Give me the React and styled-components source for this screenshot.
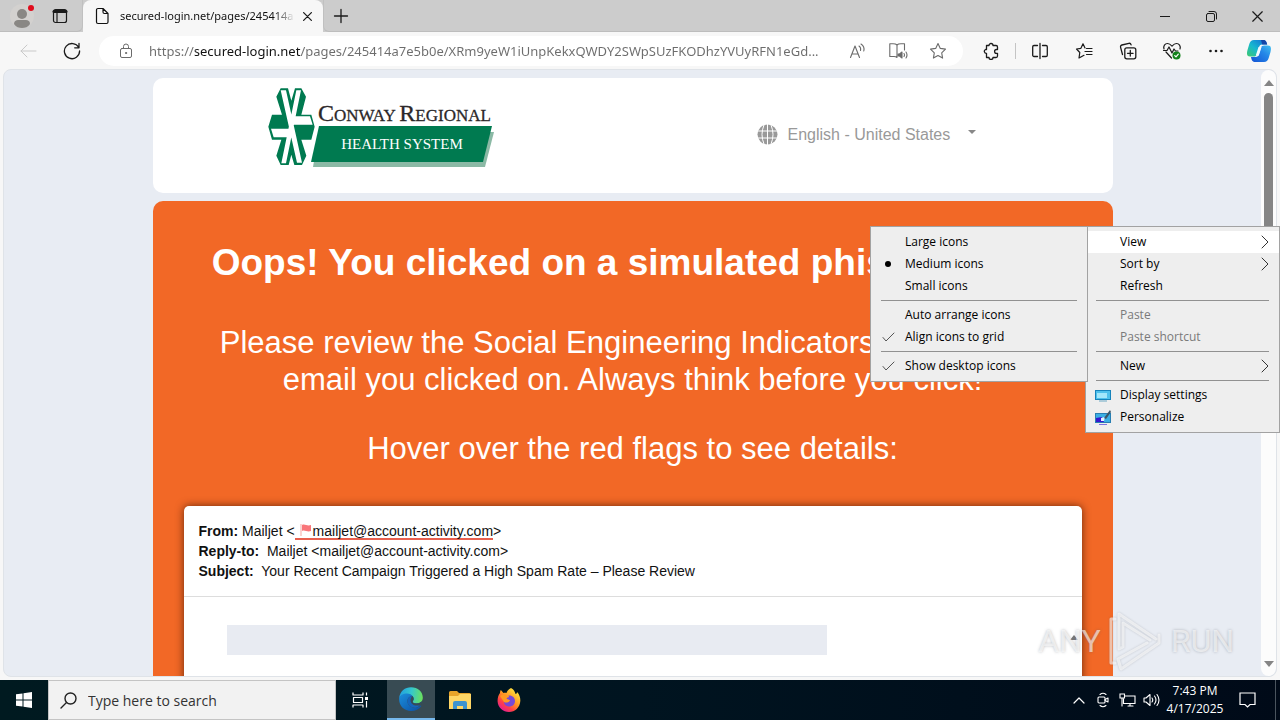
import React from "react";
import styled, { createGlobalStyle } from "styled-components";

const ui = `"Open Sans", "Noto Sans", sans-serif`;
const noto = `"Noto Sans", "Open Sans", sans-serif`;
const arial = `"Liberation Sans", Arial, sans-serif`;

const Global = createGlobalStyle`
  *, *::before, *::after { box-sizing: border-box; }
  body { margin: 0; font-family: ${ui}; color: #111; background: #f7f7f7; overflow: hidden; }
  button, input, select { font: inherit; color: inherit; }
  h1, p { margin: 0; }
`;

const Desktop = styled.div`
  position: relative;
  display: flex;
  flex-direction: column;
  height: 100vh;
  overflow: hidden;
`;

const IconButton = styled.button`
  display: flex;
  flex: none;
  align-items: center;
  justify-content: center;
  width: ${(p) => p.$w || 44}px;
  height: ${(p) => p.$h || 32}px;
  padding: 0;
  border: 0;
  background: transparent;
  color: ${(p) => p.$color || "#1b1b1b"};
  svg { display: block; }
`;

/* Tab strip */
const TabStrip = styled.div`
  display: flex;
  flex: none;
  align-items: stretch;
  height: 32px;
  background: #cccccc;
`;
const StripStart = styled.div`
  display: flex;
  width: 83px;
  padding-left: 2px;
  border-bottom: 1px solid #bdbdbd;
  border-right: 1px solid #c0c0c0;
  border-radius: 0 0 6px 0;
`;
const Tab = styled.div`
  display: flex;
  align-items: center;
  width: 240px;
  padding: 0 4px 0 12px;
  border-radius: 8px 8px 0 0;
  background: #f7f7f7;
  svg { flex: none; }
`;
const TabTitle = styled.span`
  flex: 1;
  min-width: 0;
  margin-left: 11px;
  overflow: hidden;
  white-space: nowrap;
  font-family: ${noto};
  font-size: 11px;
  line-height: 16px;
  mask-image: linear-gradient(90deg, #000 88%, transparent);
`;
const StripEnd = styled.div`
  display: flex;
  flex: 1;
  border-bottom: 1px solid #bdbdbd;
  border-left: 1px solid #c0c0c0;
  border-radius: 0 0 0 6px;
`;
const Spacer = styled.div`
  flex: 1;
`;

/* Toolbar */
const Toolbar = styled.div`
  display: flex;
  flex: none;
  align-items: center;
  height: 37px;
  padding-left: 6px;
  background: #f7f7f7;
`;
const AddressBar = styled.label`
  display: flex;
  flex: 1;
  align-items: center;
  min-width: 0;
  height: 30px;
  margin: 0 6px 0 5px;
  padding: 0 5px;
  border-radius: 15px;
  background: #fff;
`;
const Url = styled.input`
  flex: 1;
  min-width: 0;
  height: 24px;
  padding: 0 0 0 1px;
  border: 0;
  outline: 0;
  font-family: ${noto};
  font-size: 13px;
  color: transparent;
  background: linear-gradient(90deg, #6c6c6c 47px, #111 47px, #111 153px, #6c6c6c 153px);
  -webkit-background-clip: text;
  background-clip: text;
`;
const ToolDivider = styled.span`
  width: 1px;
  height: 16px;
  margin: 0 2px;
  background: #c4c4c4;
`;

/* Web page */
const PageFrame = styled.main`
  display: flex;
  flex: 1;
  min-height: 0;
  margin: 0 3px 3px;
  border: 1px solid #dfe3e8;
  border-radius: 8px;
  overflow: hidden;
  background: #e8ecf3;
`;
const PageView = styled.div`
  flex: 1;
  min-width: 0;
  overflow: hidden;
  padding-top: 8px;
  font-family: ${arial};
`;
const Column = styled.div`
  display: flex;
  flex-direction: column;
  gap: 8px;
  max-width: 960px;
  margin: 0 auto;
`;
const BrandCard = styled.header`
  display: flex;
  align-items: center;
  justify-content: space-between;
  height: 115px;
  padding: 0 137px 2px 115px;
  border-radius: 10px;
  background: #fff;
`;
const BrandLink = styled.a`
  align-self: flex-start;
  padding-top: 9px;
  svg { display: block; }
`;
const Language = styled.label`
  display: flex;
  align-items: center;
  gap: 10px;
  color: #999;
`;
const LanguageSelect = styled.select`
  appearance: none;
  width: 180px;
  padding: 0;
  border: 0;
  background: transparent;
  font-size: 16px;
  line-height: 24px;
`;
const SelectWrap = styled.span`
  display: flex;
  align-items: center;
`;
const Alert = styled.section`
  display: flex;
  flex-direction: column;
  padding: 40px 31px 0;
  border-radius: 10px 10px 0 0;
  background: #f26826;
  color: #fff;
  text-align: center;
`;
const AlertTitle = styled.h1`
  margin-bottom: 39px;
  font-size: 37px;
  line-height: 44px;
  font-weight: 700;
`;
const AlertText = styled.p`
  margin-bottom: 32px;
  font-size: 31px;
  line-height: 37px;
`;
const Mail = styled.article`
  margin-top: 7px;
  border-radius: 5px;
  background: #fff;
  color: #111;
  text-align: left;
  box-shadow: 0 0 8px 0 rgba(60, 20, 0, 0.75);
`;
const MailHead = styled.div`
  padding: 15px;
  border-bottom: 1px solid #ddd;
  font-size: 14px;
  line-height: 20px;
`;
const MailLine = styled.div`
  white-space: pre;
  height: 20px;
`;
const Flagged = styled.a`
  display: inline-block;
  height: 19px;
  padding-left: 4px;
  border-bottom: 2px solid #e8604f;
  color: inherit;
  text-decoration: none;
`;
const MailBody = styled.div`
  display: flex;
  justify-content: space-between;
  height: 260px;
  padding: 28px 3px 0 43px;
`;
const Block = styled.div`
  flex: 0 1 600px;
  height: 30px;
  background: #e8ebf2;
`;

const Scroller = styled.div`
  display: flex;
  flex: none;
  flex-direction: column;
  align-items: center;
  justify-content: space-between;
  width: 15px;
  padding: 10px 0 9px;
  border-radius: 8px;
  background: #fcfcfc;
  color: #858585;
  svg { display: block; }
`;
const Thumb = styled.div`
  width: 9px;
  height: 268px;
  margin: 7px 0 auto;
  border-radius: 5px;
  background: #858585;
`;

/* Watermark */
const Watermark = styled.div`
  position: absolute;
  right: 46px;
  bottom: 47px;
  display: flex;
  align-items: center;
  gap: 6px;
  color: rgba(255, 255, 255, 0.6);
  font-family: Roboto, sans-serif;
  font-size: 32px;
  line-height: 64px;
  text-shadow: 0 0 3px rgba(90, 95, 105, 0.4);
  pointer-events: none;
  svg { display: block; }
  g { filter: drop-shadow(0 0 1px rgba(80, 85, 95, 0.4)); }
`;

/* Context menus */
const Menu = styled.ul`
  position: absolute;
  top: 226px;
  right: ${(p) => p.$right}px;
  width: ${(p) => p.$w}px;
  margin: 0;
  padding: 4px 0;
  list-style: none;
  border: 1px solid #a2a2a2;
  background: #eeeeee;
  font-size: 12px;
`;
const MenuItem = styled.button`
  display: grid;
  grid-template-columns: 34px 1fr 14px;
  align-items: center;
  width: 100%;
  height: 22px;
  padding: 0 4px 0 0;
  border: 0;
  text-align: left;
  line-height: 16px;
  background: ${(p) => (p.$active ? "#fff" : "transparent")};
  color: ${(p) => (p.disabled ? "#7a7a7a" : "#000")};
`;
const MenuMark = styled.span`
  display: flex;
  justify-content: center;
`;
const MenuRule = styled.li`
  height: 1px;
  margin: 3px 10px;
  background: #919191;
`;

/* Taskbar */
const Taskbar = styled.footer`
  display: flex;
  flex: none;
  align-items: stretch;
  height: 40px;
  background: linear-gradient(90deg, #001a20, #001420 50%, #000a18);
  color: #fff;
`;
const TaskSearch = styled.label`
  display: flex;
  align-items: center;
  gap: 11px;
  flex: 0 1 288px;
  padding-left: 11px;
  border: 1px solid #c4c4c4;
  background: #f2f2f2;
  color: #222;
`;
const SearchInput = styled.input`
  flex: 1;
  min-width: 0;
  padding: 0;
  border: 0;
  outline: 0;
  background: transparent;
  font-size: 14px;
  &::placeholder { color: #333; opacity: 1; }
`;
const TaskApp = styled(IconButton)`
  margin-left: ${(p) => (p.$active ? 3 : 0)}px;
  background: ${(p) => (p.$active ? "#384b53" : "transparent")};
  border-bottom: ${(p) => (p.$active ? "2px solid #76b9ed" : "0")};
`;
const Clock = styled.time`
  display: flex;
  flex-direction: column;
  justify-content: center;
  width: 64px;
  text-align: center;
  font-size: 12px;
  line-height: 18px;
`;
const ShowDesktop = styled.button`
  width: 5px;
  margin-left: 8px;
  padding: 0;
  border: 0;
  border-left: 1px solid #4a545e;
  background: transparent;
`;

const Svg = ({ w = 20, h = w, box = `0 0 ${w} ${h}`, sw = 1, children, ...rest }) => (
  <svg width={w} height={h} viewBox={box} fill="none" stroke="currentColor" strokeWidth={sw}
    strokeLinecap="round" strokeLinejoin="round" aria-hidden="true" {...rest}>{children}</svg>
);

const Arrow = ({ down }) => (
  <svg width="10" height="6" viewBox="0 0 10 6" aria-hidden="true">
    <path d={down ? "M0 0h10L5 6z" : "M0 6h10L5 0z"} fill="currentColor" />
  </svg>
);

const Avatar = () => (
  <Svg w={30} h={28} stroke="none">
    <circle cx="15" cy="14" r="12" fill="#d3d1cf" />
    <circle cx="15" cy="12" r="5" fill="#898784" />
    <path d="M7 22c0-3 2-4 4-4h8c2 0 4 1 4 4-2 3-5 4-8 4s-6-1-8-4z" fill="#898784" />
    <circle cx="24" cy="6" r="3" fill="#e00b1c" />
  </Svg>
);
const Workspaces = () => (
  <Svg w={16} sw={1.2}>
    <rect x="1.5" y="1.5" width="13" height="13" rx="2" />
    <path d="M2 3.5h12" strokeWidth="3" />
    <path d="M5 5v9" />
  </Svg>
);
const PageIcon = () => (
  <Svg w={14} h={18} sw={1.2}>
    <path d="M3 1.5h5l5 5v8.500a1.500 1.500 0 0 1-1.500 1.500H3A1.500 1.500 0 0 1 1.500 15V3A1.500 1.500 0 0 1 3 1.500zM8 1.500V5A1.500 1.500 0 0 0 9.500 6.500H13" />
  </Svg>
);
const Cross = ({ s = 10 }) => (
  <Svg w={s} box="0 0 10 10" sw={s > 9 ? 1.1 : 1.4}><path d="M.7.7l8.600 8.600M9.300.7L.7 9.300" /></Svg>
);
const Plus = () => <Svg w={16} sw={1.3}><path d="M8 1.500v13M1.500 8h13" /></Svg>;
const Back = () => <Svg w={18}><path d="M17 9H2M8 3L2 9l6 6" /></Svg>;
const Refresh = () => (
  <Svg w={18} sw={1.3}><path d="M15.700 5.500A7.600 7.600 0 1 0 16.600 9M16 1.500v4.300h-4.300" /></Svg>
);
const Lock = () => (
  <Svg w={14} h={16}>
    <rect x="1.500" y="5.500" width="11" height="9" rx="1.500" />
    <path d="M4.500 5.500V3.500a2.500 2.500 0 0 1 5 0v2" />
    <circle cx="7" cy="10" r=".6" fill="currentColor" />
  </Svg>
);
const ReadAloud = () => (
  <Svg w={18} h={16} sw={1.1}>
    <path d="M1.500 14.500L6 3l4.500 11.500M3 11h6M10 3c1.500 1 2 2.500 1.500 4.500M12 1c2.500 1.500 3.500 4 2.800 7" />
  </Svg>
);
const Reader = () => (
  <Svg w={20} h={18} sw={1.1}>
    <path d="M9 3v12M9 3C8 2 7 1.800 5 1.800H1.800v12.700H6c1.500 0 2.300.4 3 1M9 3c1-1 2-1.200 4-1.200h3.500V8" />
    <path d="M10 12h1.500l2.500-2v6l-2.500-2H10z" fill="currentColor" />
    <path d="M16 11.500q1 1.500 0 3M18 10q2 3 0 6" />
  </Svg>
);
const Star = () => (
  <Svg w={18} sw={1.1}>
    <path d="M9 1.500l2.300 4.900 5.200.7-3.800 3.700.9 5.300L9 13.600l-4.600 2.500.9-5.300L1.500 7.100l5.200-.7z" />
  </Svg>
);
const Puzzle = () => (
  <Svg w={18} sw={1.3}>
    <path d="M4.500 3.500H7a2 2 0 0 1 4 0h3c.8 0 1.500.6 1.500 1.500v2.500h-1a1.900 1.900 0 0 0 0 3.800h1V14c0 .8-.7 1.500-1.500 1.500h-3a2 2 0 0 1-4 0H4.500V11.300a2 2 0 0 1-1-3.800h1z" />
  </Svg>
);
const Split = () => (
  <Svg w={18} sw={1.3}>
    <path d="M6.500 3.500H3A1.300 1.300 0 0 0 1.700 4.800v8.400A1.300 1.300 0 0 0 3 14.500h3.500M11.500 3.500H15a1.300 1.300 0 0 1 1.300 1.300v8.400a1.300 1.300 0 0 1-1.300 1.300h-3.500M9 1.500v15" />
  </Svg>
);
const Favorites = () => (
  <Svg w={18} sw={1.2}>
    <path d="M10 6L8 1.800 5.900 6.300 1.500 7l3.300 3.500L4 16l5-2.700M11.500 6.500h5.500M10 9.500h7M11.500 12.500h5.500" />
  </Svg>
);
const Collections = () => (
  <Svg w={18} sw={1.3}>
    <rect x="5.800" y="5.800" width="11" height="11" rx="2" />
    <path d="M11.300 8.500v5.500M8.500 11.300h5.600M3.500 12.500L1.600 5.300c-.3-1 .2-2 1.300-2.300l7-1.700c1-.2 1.900.4 2.200 1.500" />
  </Svg>
);
const Health = () => (
  <Svg w={20} h={18} sw={1.2}>
    <path d="M2 7C1 4 3 1.500 5.500 1.500c2 0 3 1 4.500 2.700 1.500-1.700 2.500-2.700 4.500-2.700C17 1.500 19 4 18 7M4 10l5.500 6M1.500 8.500H5l2-3.500 3 6 2-4 1.500 2H16" />
    <circle cx="14.500" cy="13.500" r="4" fill="#13821b" stroke="none" />
    <path d="M12.700 13.600l1.300 1.200 2.300-2.600" stroke="#fff" />
  </Svg>
);
const Dots = () => (
  <Svg w={16} h={4} stroke="none" fill="currentColor">
    <circle cx="2.500" cy="2" r="1.300" /><circle cx="8" cy="2" r="1.300" /><circle cx="13.500" cy="2" r="1.300" />
  </Svg>
);
const Copilot = () => (
  <svg width="26" height="24" viewBox="0 0 26 24" aria-hidden="true">
    <defs>
      <linearGradient id="cpA" x1="0" y1="1" x2="1" y2="0">
        <stop offset="0" stopColor="#3fc96f" /><stop offset=".45" stopColor="#16b8cf" /><stop offset="1" stopColor="#1366d9" />
      </linearGradient>
      <linearGradient id="cpB" x1="0" y1="1" x2="1" y2="0">
        <stop offset="0" stopColor="#1453d4" /><stop offset=".6" stopColor="#2588e8" /><stop offset="1" stopColor="#42c2f0" />
      </linearGradient>
    </defs>
    <path d="M8 1h9c3 0 3.500 2 4.200 4.500h-5c-2 0-2.700 1.200-3.300 3.200l-1.800 6C10.400 17 9.500 17.500 7.500 17.500H4C.5 17.500.7 14 1.500 11l1.800-6C4.200 2.200 5.500 1 8 1z" fill="url(#cpA)" />
    <path d="M18 23H9.500C6.500 23 5.500 21 5 18h4.500c2 0 3-.8 3.600-3l1.800-6c.6-2 1.500-2.600 3.500-2.600H22c3.500 0 3.300 3.500 2.500 6.500l-1.800 6C21.800 21.700 20.500 23 18 23z" fill="url(#cpB)" />
    <path d="M12.500 8h3l-2.700 8.500h-3z" fill="#f2f9ff" />
    <path d="M17 1c3 0 3.500 2 4.200 4.500h-5L15 1z" fill="#1546a8" />
  </svg>
);

const BrandLogo = () => (
  <svg width="228" height="82" viewBox="0 0 228 82" role="img" aria-label="Conway Regional Health System">
    <g transform="translate(-4 -3) scale(.3333)">
      <path d="M50 13H72L82 50L93 13H112L126 38L112 92H142L152 128L142 167H112L127 215L114 243H91L82 212L74 243H50L37 215L52 167H24L13 128L24 92H54L37 38Z" fill="#007a50" />
      <path d="M50 19H66L114 236H99ZM97 19H111L66 238H52ZM21 134H90V160H29ZM84 97H138L146 122H84Z" fill="#fff" />
    </g>
    <path d="M51 45h175l-9 35H45z" fill="#8bb9a5" />
    <path d="M51 39h173l-9 36H43z" fill="#007a50" />
    <text x="50" y="34" fontFamily="Liberation Serif" fontSize="24" fill="#2b2729" stroke="#2b2729" strokeWidth=".3">
      C<tspan fontSize="17">ONWAY </tspan>R<tspan fontSize="17">EGIONAL</tspan>
    </text>
    <text x="134" y="62" textAnchor="middle" fontFamily="Liberation Serif" fontSize="15" fill="#fff">HEALTH SYSTEM</text>
  </svg>
);
const Globe = () => (
  <svg width="21" height="21" viewBox="0 0 21 21" aria-hidden="true">
    <circle cx="10.500" cy="10.500" r="10" fill="#999" />
    <path d="M10.500 0v21M0 7h21M0 14h21M7 1q-4 9.500 0 19M14 1q4 9.500 0 19" stroke="#fff" fill="none" />
  </svg>
);
const Flag = () => (
  <svg width="14" height="12" viewBox="0 0 14 12" aria-hidden="true">
    <path d="M2 0v12" stroke="#f5a9a4" />
    <path d="M3 1c3-1.500 5 1.500 9 0v6c-4 1.500-6-1.500-9 0z" fill="#f9767a" />
  </svg>
);
const PlayMark = () => (
  <Svg w={58} h={64} sw={3}>
    <g stroke="rgba(255,255,255,.6)">
      <path d="M8 10H4V54H8" />
      <path d="M49 30L12 5V40L16 38V14L43 31" />
      <path d="M52 26V34L14 60L11 50L40 34" />
    </g>
  </Svg>
);

const Tick = () => <Svg w={13} h={10} stroke="#555"><path d="M1 5.500L4 9l8-8" /></Svg>;
const Bullet = () => <svg width="6" height="6" aria-hidden="true"><circle cx="3" cy="3" r="3" /></svg>;
const Chevron = () => <Svg w={8} h={14} stroke="#333"><path d="M1 1l6 6-6 6" /></Svg>;
const DisplayIcon = () => (
  <svg width="16" height="13" viewBox="0 0 16 13" aria-hidden="true">
    <path d="M0 1h16v10H0z" fill="#1683bb" /><path d="M1 2h14v8H1z" fill="#4fc1ec" />
    <path d="M2 4h10v5H2z" fill="#a3e7fb" /><path d="M4 12h8" stroke="#6ca9c4" />
  </svg>
);
const PersonalizeIcon = () => (
  <svg width="16" height="15" viewBox="0 0 16 15" aria-hidden="true">
    <path d="M0 3h16v10H0z" fill="#287fb2" /><path d="M1 4h14v8H1z" fill="#3baee3" />
    <path d="M1 8l6-1 2 5H1z" fill="#3516cf" /><path d="M6 8l4-1-1 4H6z" fill="#e3f2ff" />
    <path d="M9 8l6-8 1 2-5 7z" fill="#3b5668" /><path d="M4 14.500h8" stroke="#7b72df" />
  </svg>
);

const WindowsLogo = () => (
  <svg width="16" height="16" viewBox="0 0 16 16" aria-hidden="true">
    <path d="M0 2.300l6.500-.9v6.100H0zM7.500 1.200L16 0v7.500H7.500zM0 8.500h6.500v6.100L0 13.700zM7.500 8.500H16V16l-8.500-1.200z" fill="#fff" />
  </svg>
);
const SearchGlyph = () => <Svg w={17} sw={1.4}><circle cx="10.500" cy="6.500" r="5.500" /><path d="M6.500 10.500L1 16" /></Svg>;
const TaskViewIcon = () => (
  <Svg w={17} h={16} strokeLinecap="butt" sw={1.2}>
    <path d="M1 .5v2.500h10V.5M1 15.500V13h10v2.500M1.500 5.500h9v5h-9zM14.500 .5v3M14.500 9v6.500" />
    <path d="M13 5h3v3h-3z" fill="currentColor" stroke="none" />
  </Svg>
);
const EdgeIcon = () => (
  <svg width="24" height="24" viewBox="0 0 24 24" aria-hidden="true">
    <defs>
      <linearGradient id="egT" x1="0" y1=".4" x2="1" y2=".5">
        <stop offset="0" stopColor="#219fe0" /><stop offset=".5" stopColor="#35c7cd" /><stop offset="1" stopColor="#6be15c" />
      </linearGradient>
      <linearGradient id="egB" x1="0" y1="0" x2="1" y2="1">
        <stop offset="0" stopColor="#1b8fdc" /><stop offset="1" stopColor="#0c4fa4" />
      </linearGradient>
    </defs>
    <path d="M.2 11C1 4 6 .2 12 .2 19 .2 23.800 5 23.800 10.500c0 4-3 6-6.300 6-2.500 0-4-1-4-1.800 0-.6 1-1 1-2.700C14.500 9.500 12 7 8.500 7 4.500 7 1.500 9 .2 11z" fill="url(#egT)" />
    <path d="M.2 11C1 8.500 4 6.500 8 6.500c2.500 0 4.500 1 5.500 2.500C10 9 8 12 8.500 15c.6 4 5 6.700 9.500 5.500 1.500-.4 2.500-1 3.500-1.800.4-.3.900 0 .6.500C20 22 16.500 24 12 24 5 24-.5 18.500.2 11z" fill="url(#egB)" />
    <path d="M8.500 15C8 12 10 9 13.500 9c1.500 2 1.300 4 .4 5-.8 1 .4 2.500 3.600 2.500 2 0 3.800-.7 5-2-.5 3-2.500 5.300-5 6-4 1-8.400-1.500-9-5.500z" fill="#1565bd" />
    <path d="M13.500 9c1.500 1.500 1.400 4 .4 5-.8 1 .4 2.500 3.600 2.500 2 0 3.800-.7 5-2l-.9 3.200c-3 1.600-7.600 1-9.300-1.700-1.500-2.300-.8-5.500 1.200-7z" fill="#384b53" />
  </svg>
);
const FolderIcon = () => (
  <svg width="22" height="19" viewBox="0 0 22 19" aria-hidden="true">
    <path d="M0 1.500Q0 0 1.500 0H8l2 2h10.500Q22 2 22 3.500V18H0z" fill="#e8a52a" />
    <path d="M0 5h9l2-2h11v15H0z" fill="#ffd766" />
    <path d="M4 18v-6q0-2 2-2h10q2 0 2 2v6h-4v-3H8v3z" fill="#3e94cf" />
  </svg>
);
const FirefoxIcon = () => (
  <svg width="24" height="24" viewBox="0 0 24 24" aria-hidden="true">
    <defs>
      <linearGradient id="ffx" x1=".8" y1=".1" x2=".2" y2=".9">
        <stop offset="0" stopColor="#ffe23d" /><stop offset=".45" stopColor="#ff9422" /><stop offset=".75" stopColor="#ff4046" /><stop offset="1" stopColor="#e6218c" />
      </linearGradient>
    </defs>
    <path d="M14 0c3 1.500 4 4 4.500 6 1 0 1.500-.8 1.500-2 2.500 2.500 3.500 6 3.300 9C23 19.500 18 24 12 24S1 19.500.6 13.500C.4 10 1.500 7 3 5c0 0 0-1.500.8-3C5 3 5.500 4 6.500 5c1-.3 2-.3 3 0C10 3 12 1 14 0z" fill="url(#ffx)" />
    <path d="M11.500 7.500c3.500-.5 6.500 2 6.500 5.500 0 3.300-2.500 5.500-5.700 5.500-3.300 0-5.500-2.200-5.500-5 1 1 2.500 1 3.700.3 1.500-1 2-1 2-1.800-1.300-.5-2.800-.6-3.500-2 .5-1 2-1 2.500-1.200z" fill="#7649d6" />
    <path d="M3 8c2-1.500 4-1.500 6-.5 1.500.7 3 .5 3 1.300 0 .7-2 .7-2.500 1.700 0 1.500 3.500 1 3.500 2.200-1 1.300-3.500 2.600-6 1.300z" fill="#ff9a22" />
  </svg>
);
const MeetIcon = () => (
  <Svg w={12} h={16} sw={1.1}>
    <rect x="1" y="5" width="7" height="6" rx="1" /><path d="M8 7.500l3-1.500v4L8 8.500M3 2.500q3-2.500 6 0M3 13.500q3 2.500 6 0" />
  </Svg>
);
const NetIcon = () => (
  <Svg w={17} h={14} sw={1.1} strokeLinejoin="miter">
    <path d="M6 3h10v7.500H4.500V6M9 13h5M11 10.500V13M1 1h4.500v4H1zM3 5v8" />
  </Svg>
);
const VolumeIcon = () => (
  <Svg w={17} h={14} sw={1.1}><path d="M1 5h2l4-3.500v11L3 9H1zM9 5q1.500 2 0 4M11.500 3q3 4 0 8M14 1.500q4 5.500 0 11" /></Svg>
);
const NoteIcon = () => (
  <Svg w={17} h={16} sw={1.2} strokeLinejoin="miter"><path d="M1 1h15v11.500h-5L8.500 15 6 12.500H1z" /></Svg>
);

const viewMenu = [
  { label: "Large icons" },
  { label: "Medium icons", mark: <Bullet /> },
  { label: "Small icons" },
  null,
  { label: "Auto arrange icons" },
  { label: "Align icons to grid", mark: <Tick /> },
  null,
  { label: "Show desktop icons", mark: <Tick /> },
];
const desktopMenu = [
  { label: "View", more: true, active: true },
  { label: "Sort by", more: true },
  { label: "Refresh" },
  null,
  { label: "Paste", disabled: true },
  { label: "Paste shortcut", disabled: true },
  null,
  { label: "New", more: true },
  null,
  { label: "Display settings", mark: <DisplayIcon /> },
  { label: "Personalize", mark: <PersonalizeIcon /> },
];

const ContextMenu = ({ items, right, width }) => (
  <Menu $right={right} $w={width}>
    {items.map((item, i) =>
      item ? (
        <li key={item.label}>
          <MenuItem $active={item.active} disabled={item.disabled}>
            <MenuMark>{item.mark}</MenuMark>
            <span>{item.label}</span>
            {item.more && <Chevron />}
          </MenuItem>
        </li>
      ) : (
        <MenuRule key={i} />
      )
    )}
  </Menu>
);

const tools = [
  ["Split screen", <Split />],
  ["Favorites", <Favorites />],
  ["Collections", <Collections />],
  ["Browser essentials", <Health />],
  ["Settings and more", <Dots />],
];

export default function App() {
  return (
    <Desktop>
      <Global />
      <TabStrip>
        <StripStart>
          <IconButton $w={40} aria-label="Profile"><Avatar /></IconButton>
          <IconButton $w={36} aria-label="Tab actions"><Workspaces /></IconButton>
        </StripStart>
        <Tab>
          <PageIcon />
          <TabTitle>secured-login.net/pages/245414a</TabTitle>
          <IconButton $w={24} $h={24} aria-label="Close tab"><Cross s={9} /></IconButton>
        </Tab>
        <StripEnd>
          <IconButton $w={34} aria-label="New tab"><Plus /></IconButton>
          <Spacer />
          <IconButton $w={46} aria-label="Minimize"><Svg w={10}><path d="M0 5.500h10" /></Svg></IconButton>
          <IconButton $w={46} aria-label="Restore">
            <Svg w={11}><rect x=".5" y="2.500" width="8" height="8" rx="1.500" /><path d="M3 .5h5a2.500 2.500 0 0 1 2.500 2.500v5" /></Svg>
          </IconButton>
          <IconButton $w={46} aria-label="Close"><Cross s={11} /></IconButton>
        </StripEnd>
      </TabStrip>

      <Toolbar>
        <IconButton $color="#c9c9c9" aria-label="Back"><Back /></IconButton>
        <IconButton aria-label="Refresh"><Refresh /></IconButton>
        <AddressBar>
          <IconButton $color="#6b6b6b" aria-label="Site information"><Lock /></IconButton>
          <Url
            aria-label="Address"
            readOnly
            value="https://secured-login.net/pages/245414a7e5b0e/XRm9yeW1iUnpKekxQWDY2SWpSUzFKODhzYVUyRFN1eGd..."
          />
          <IconButton $w={40} $color="#6b6b6b" aria-label="Read aloud"><ReadAloud /></IconButton>
          <IconButton $w={40} $color="#6b6b6b" aria-label="Immersive reader"><Reader /></IconButton>
          <IconButton $w={40} $color="#6b6b6b" aria-label="Add to favorites"><Star /></IconButton>
        </AddressBar>
        <IconButton aria-label="Extensions"><Puzzle /></IconButton>
        <ToolDivider />
        {tools.map(([name, icon]) => (
          <IconButton key={name} aria-label={name}>{icon}</IconButton>
        ))}
        <IconButton $w={42} aria-label="Copilot"><Copilot /></IconButton>
      </Toolbar>

      <PageFrame>
        <PageView>
          <Column>
            <BrandCard>
              <BrandLink href="#"><BrandLogo /></BrandLink>
              <Language>
                <Globe />
                <SelectWrap>
                  <LanguageSelect aria-label="Language" defaultValue="en">
                    <option value="en">English - United States</option>
                  </LanguageSelect>
                  <svg width="8" height="10" viewBox="0 0 8 10" aria-hidden="true"><path d="M0 0h8L4 4z" fill="#888" /></svg>
                </SelectWrap>
              </Language>
            </BrandCard>
            <Alert>
              <AlertTitle>Oops! You clicked on a simulated phishing test!</AlertTitle>
              <AlertText>
                Please review the Social Engineering Indicators found in the<br />
                email you clicked on. Always think before you click!
              </AlertText>
              <AlertText>Hover over the red flags to see details:</AlertText>
              <Mail>
                <MailHead>
                  <MailLine>
                    <b>From:</b> Mailjet &lt;<Flagged href="#"><Flag />mailjet@account-activity.com</Flagged>&gt;
                  </MailLine>
                  <MailLine><b>Reply-to:</b>{"  Mailjet <mailjet@account-activity.com>"}</MailLine>
                  <MailLine><b>Subject:</b>{"  Your Recent Campaign Triggered a High Spam Rate – Please Review"}</MailLine>
                </MailHead>
                <MailBody>
                  <Block />
                  <Spacer />
                  <svg width="10" height="20" viewBox="0 0 10 20" aria-hidden="true"><path d="M1 15h8L5 10z" fill="#777" /></svg>
                </MailBody>
              </Mail>
            </Alert>
          </Column>
        </PageView>
        <Scroller>
          <Arrow />
          <Thumb />
          <Arrow down />
        </Scroller>
      </PageFrame>

      <Taskbar>
        <IconButton $w={48} $h={40} aria-label="Start"><WindowsLogo /></IconButton>
        <TaskSearch>
          <SearchGlyph />
          <SearchInput aria-label="Search" placeholder="Type here to search" />
        </TaskSearch>
        <TaskApp $w={48} $h={40} $color="#fff" aria-label="Task view"><TaskViewIcon /></TaskApp>
        <TaskApp $w={48} $h={40} $active aria-label="Microsoft Edge"><EdgeIcon /></TaskApp>
        <TaskApp $w={49} $h={40} aria-label="File Explorer"><FolderIcon /></TaskApp>
        <TaskApp $w={49} $h={40} aria-label="Firefox"><FirefoxIcon /></TaskApp>
        <Spacer />
        <IconButton $w={24} $h={40} $color="#fff" aria-label="Show hidden icons">
          <Svg w={12} h={7} sw={1.2}><path d="M1 6l5-5 5 5" /></Svg>
        </IconButton>
        <IconButton $w={24} $h={40} $color="#fff" aria-label="Meet now"><MeetIcon /></IconButton>
        <IconButton $w={24} $h={40} $color="#fff" aria-label="Network"><NetIcon /></IconButton>
        <IconButton $w={24} $h={40} $color="#fff" aria-label="Volume"><VolumeIcon /></IconButton>
        <Clock><span>7:43 PM</span><span>4/17/2025</span></Clock>
        <IconButton $w={40} $h={40} $color="#fff" aria-label="Notifications"><NoteIcon /></IconButton>
        <ShowDesktop aria-label="Show desktop" />
      </Taskbar>

      <Watermark>
        <span>ANY</span>
        <PlayMark />
        <span>RUN</span>
      </Watermark>

      <ContextMenu items={desktopMenu} right={0} width={195} />
      <ContextMenu items={viewMenu} right={192} width={218} />
    </Desktop>
  );
}
